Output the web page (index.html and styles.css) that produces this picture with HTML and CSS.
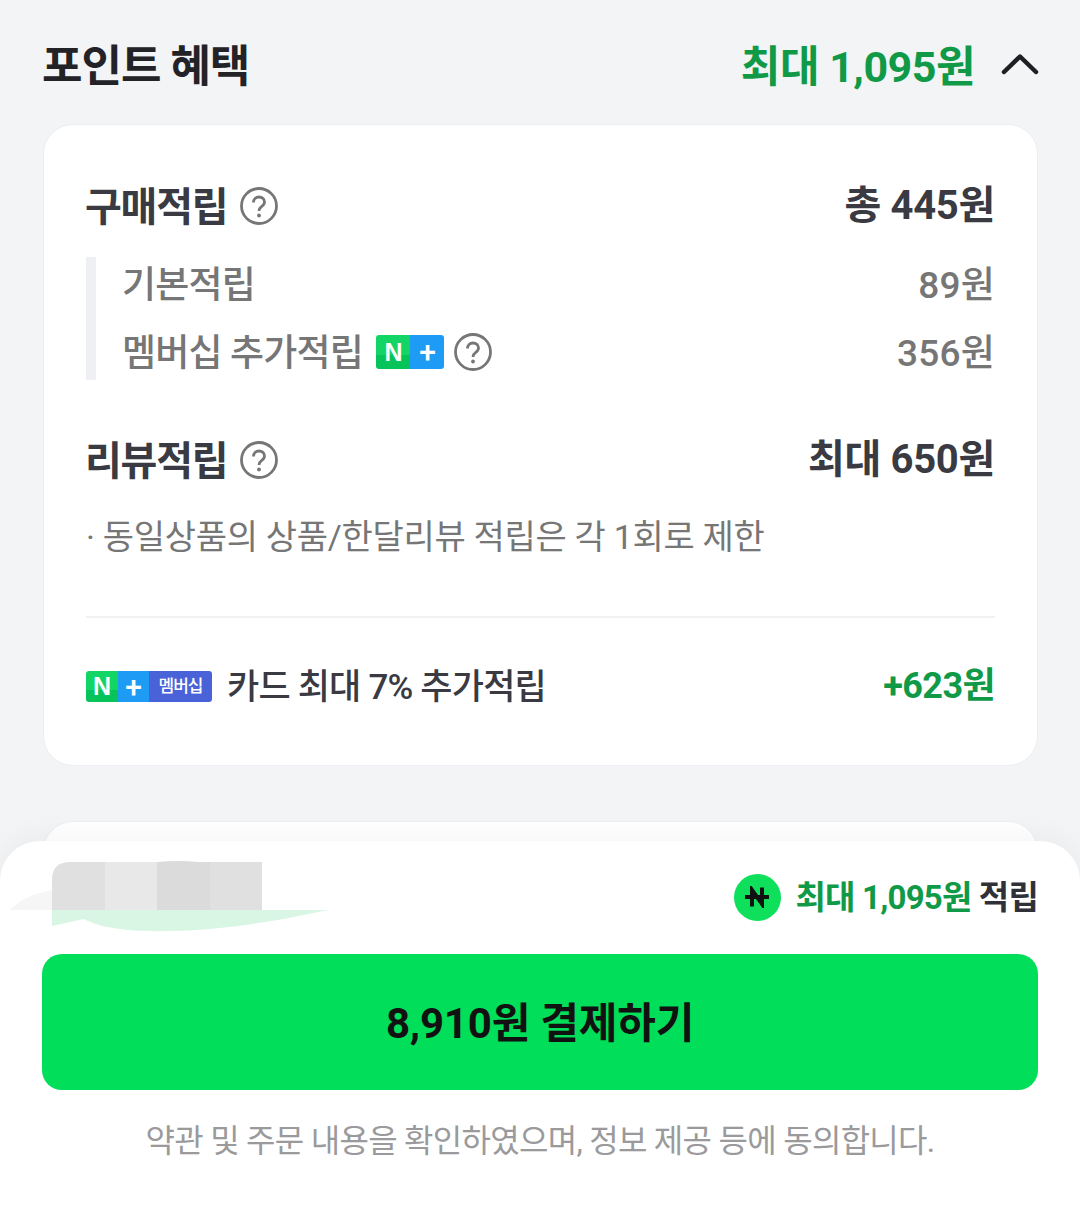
FILE: index.html
```html
<!DOCTYPE html>
<html lang="ko">
<head>
    <meta charset="UTF-8">
    <meta name="viewport" content="width=device-width, initial-scale=1.0">
    <title>포인트 혜택</title>
    <link rel="stylesheet" href="styles.css">
</head>
<body>
    <svg width="0" height="0" class="defs">
        <symbol id="help" viewBox="0 0 38 38">
            <circle cx="19" cy="19" r="17.500" fill="none" stroke="#767676" stroke-width="2.800"/>
            <path d="M13.500 15.500c0-3.400 2.400-5.500 5.500-5.500s5.500 2 5.500 5c0 2.400-1.300 3.500-3 4.700-1.700 1.200-2.500 2.200-2.500 4.300" fill="none" stroke="#767676" stroke-width="2.800"/>
            <circle cx="19" cy="28.500" r="1.900" fill="#767676"/>
        </symbol>
    </svg>

    <div class="page">
        <header class="head">
            <h1 class="head-title">포인트 혜택</h1>
            <div class="head-right">
                <span class="head-max">최대 1,095원</span>
                <svg class="chevron" width="38" height="24" viewBox="0 0 38 24"><path d="M3 20 19 4.500 35 20" fill="none" stroke="#1e1e23" stroke-width="4.500" stroke-linecap="round" stroke-linejoin="round"/></svg>
            </div>
        </header>

        <section class="card">
            <div class="row row-main">
                <div class="label">구매적립
                    <svg class="help" width="38" height="38"><use href="#help"/></svg>
                </div>
                <div class="amount">총 445원</div>
            </div>

            <div class="detail">
                <div class="row row-sub">
                    <div class="label-sub">기본적립</div>
                    <div class="amount-sub">89원</div>
                </div>
                <div class="row row-sub">
                    <div class="label-sub">멤버십 추가적립
                        <span class="badge-np"><span class="bn">N</span><span class="bp">+</span></span>
                        <svg class="help help-after" width="38" height="38"><use href="#help"/></svg>
                    </div>
                    <div class="amount-sub">356원</div>
                </div>
            </div>

            <div class="row row-main row-review">
                <div class="label">리뷰적립
                    <svg class="help" width="38" height="38"><use href="#help"/></svg>
                </div>
                <div class="amount">최대 650원</div>
            </div>
            <p class="note">· 동일상품의 상품/한달리뷰 적립은 각 1회로 제한</p>

            <div class="card-foot">
                <div class="foot-left">
                    <span class="badge-member"><span class="bn">N</span><span class="bp">+</span><span class="bm">멤버십</span></span>
                    <span class="foot-text">카드 최대 7% 추가적립</span>
                </div>
                <div class="foot-amount">+623원</div>
            </div>
        </section>

        <section class="card card-next"></section>
    </div>

    <footer class="sheet">
        <!-- 가려진 상품 영역 -->
        <svg class="smudge" width="330" height="72" viewBox="0 0 330 72">
            <path d="M10 50C22 38 36 33 52 30V50Z" fill="#f6f6f7"/>
            <path d="M52 50H328C290 58 232 70 170 71 130 72 100 68 84 59L52 66Z" fill="#d9f6e4"/>
            <path d="M52 50V20Q52 2 70 2H105V50Z" fill="#e0e0e0"/>
            <rect x="105" y="2" width="52" height="48" fill="#e8e8e8"/>
            <path d="M157 2Q180 0 198 2H210V50H157Z" fill="#dbdbdb"/>
            <rect x="210" y="2" width="52" height="48" fill="#e0e0e0"/>
        </svg>
        <div class="sheet-point">
            <span class="coin"><svg width="30" height="22" viewBox="0 0 30 22"><path d="M10 20.500V4L20 18V1.500M3 11H27" fill="none" stroke="#111" stroke-width="4"/></svg></span>
            <span class="sheet-text"><span class="sheet-max">최대 1,095원</span> 적립</span>
        </div>
        <button class="pay" type="button">8,910원 결제하기</button>
        <p class="agree">약관 및 주문 내용을 확인하였으며, 정보 제공 등에 동의합니다.</p>
    </footer>
</body>
</html>
```

FILE: styles.css
```css
* {
    box-sizing: border-box;
}

html, body {
    margin: 0;
    height: 1218px;
    overflow: hidden;
}

body {
    font-family: Roboto, "Noto Sans CJK KR", sans-serif;
    background-color: #f3f4f6;
    color: #303038;
    position: relative;
}

.defs {
    display: block;
    height: 0;
}

.page {
    padding: 0 42px 0 43px;
}

.head {
    height: 124px;
    display: flex;
    justify-content: space-between;
    align-items: center;
    padding-top: 2px;
}

.head-title {
    margin: 0 0 0 -1px;
    font-size: 44px;
    font-weight: 700;
    letter-spacing: -1px;
    color: #222227;
}

.head-right {
    display: flex;
    align-items: center;
    gap: 26px;
}

.head-max {
    font-size: 43px;
    font-weight: 700;
    letter-spacing: -0.5px;
    color: #109a47;
}

.chevron {
    margin: 2px -1px 0 0;
}

.card {
    background: #ffffff;
    border: 1px solid #eceef1;
    border-radius: 30px;
    padding: 0 42px;
    height: 642px;
}

.card-next {
    height: 60px;
    margin-top: 55px;
}

.row {
    display: flex;
    justify-content: space-between;
    align-items: center;
}

.row-main {
    padding-top: 49px;
    height: 109px;
}

.label {
    display: flex;
    align-items: center;
    gap: 13px;
    margin-left: -1px;
    font-size: 40px;
    font-weight: 700;
    letter-spacing: -1.2px;
    color: #3a3a42;
}

.help {
    margin-top: 4px;
}

.amount {
    padding-bottom: 4px;
    font-size: 40px;
    font-weight: 700;
    letter-spacing: -0.3px;
    color: #3a3a42;
}

.detail {
    display: flow-root;
    margin-top: 23px;
    height: 123px;
    border-left: 10px solid #eff0f4;
    padding-left: 26px;
}

.row-sub {
    height: 68px;
}

.row-sub:first-child {
    margin-top: -9px;
}

.label-sub {
    display: flex;
    align-items: center;
    gap: 13px;
    font-size: 37px;
    font-weight: 500;
    letter-spacing: -0.8px;
    color: #767676;
}

.amount-sub {
    font-size: 37px;
    font-weight: 500;
    letter-spacing: 0.2px;
    color: #767676;
}

.help-after {
    margin: 4px 0 0 -3px;
}

.row-review {
    height: 109px;
    padding-top: 47px;
}

.badge-np,
.badge-member {
    display: inline-flex;
    font-weight: 700;
    color: #ffffff;
}

.badge-np {
    width: 68px;
    height: 34px;
    margin-top: 4px;
}

.badge-member {
    width: 126px;
    height: 31px;
    margin-top: 2px;
}

.bn {
    flex: 0 0 50%;
    border-radius: 3px 0 0 3px;
    background: linear-gradient(#12d565 60%, #06c45a 60%);
    font-family: "Liberation Sans", sans-serif;
    font-size: 25px;
    line-height: 34px;
    text-align: center;
}

.bp {
    flex: 0 0 50%;
    border-radius: 0 3px 3px 0;
    background: #1e9bf5;
    font-size: 30px;
    font-weight: 500;
    line-height: 34px;
    text-align: center;
}

.badge-member .bn {
    flex: 0 0 32px;
    line-height: 31px;
}

.badge-member .bp {
    flex: 0 0 31px;
    border-radius: 0;
    line-height: 31px;
}

.bm {
    flex: 1;
    border-radius: 0 3px 3px 0;
    background: #4a62d8;
    font-size: 17px;
    font-weight: 500;
    line-height: 31px;
    text-align: center;
    letter-spacing: -1px;
}

.note {
    margin: 23px 0 0;
    font-size: 34px;
    line-height: 50px;
    letter-spacing: -0.3px;
    color: #767676;
}

.card-foot {
    margin-top: 54px;
    border-top: 2px solid #f0f1f3;
    display: flex;
    justify-content: space-between;
    align-items: center;
    height: 136px;
}

.foot-left {
    display: flex;
    align-items: center;
    gap: 15px;
}

.foot-text {
    margin-bottom: 4px;
    font-size: 35px;
    font-weight: 500;
    letter-spacing: -0.8px;
    color: #3a3a42;
}

.foot-amount {
    margin-bottom: 6px;
    font-size: 36px;
    font-weight: 700;
    letter-spacing: -0.6px;
    color: #109a47;
}

.sheet {
    position: absolute;
    left: 0;
    right: 0;
    top: 841px;
    height: 377px;
    background: #ffffff;
    border-radius: 40px 40px 0 0;
    padding: 30px 42px 0;
    box-shadow: 0 -6px 30px rgba(0, 0, 0, 0.04);
}

.smudge {
    position: absolute;
    left: 0;
    top: 19px;
}

.sheet-point {
    display: flex;
    justify-content: flex-end;
    align-items: center;
    height: 52px;
}

.coin {
    width: 47px;
    height: 47px;
    margin-right: 15px;
    border-radius: 50%;
    background: #0ee05b;
    display: flex;
    align-items: center;
    justify-content: center;
}

.sheet-text {
    margin-bottom: 4px;
    font-size: 33px;
    font-weight: 700;
    letter-spacing: -0.8px;
    color: #303038;
}

.sheet-max {
    color: #109a47;
}

.pay {
    display: block;
    width: 100%;
    height: 136px;
    margin-top: 31px;
    padding: 0 0 6px;
    border: none;
    border-radius: 20px;
    background: #00de5a;
    color: #111111;
    font-family: inherit;
    font-size: 42px;
    font-weight: 700;
    letter-spacing: -0.2px;
}

.agree {
    margin: 26px 0 0;
    text-align: center;
    font-size: 32px;
    line-height: 50px;
    letter-spacing: -0.72px;
    color: #9a9a9c;
}
```
